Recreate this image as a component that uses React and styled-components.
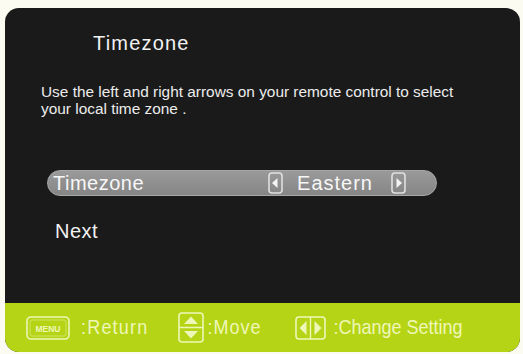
import React from 'react'
import styled, { createGlobalStyle } from 'styled-components'

const GlobalStyle = createGlobalStyle`
  html, body {
    margin: 0;
    padding: 0;
    background: #fbfbf1;
  }
  body {
    font-family: "Liberation Sans", Arial, sans-serif;
  }
`

const Frame = styled.div`
  margin: 8px 0 0 5px;
  width: 515px;
  height: 344px;
  border-radius: 14px;
  overflow: hidden;
  display: flex;
  flex-direction: column;
  background: #1a1a1a;
`

const Screen = styled.div`
  flex: 1;
  padding: 24px 0 0 36px;
  color: #f2f2f2;
`

const Title = styled.div`
  margin-left: 52px;
  font-size: 20px;
  line-height: 23px;
  letter-spacing: 1.2px;
`

const Description = styled.p`
  margin: 28px 0 0;
  font-size: 15.4px;
  line-height: 17px;
  color: #ececec;
`

const Row = styled.div`
  margin: 53px 0 0 6px;
  width: 390px;
  height: 26px;
  box-sizing: border-box;
  border-radius: 13px;
  background: linear-gradient(#9a9a9a, #858585);
  border: 1px solid #a8a8a8;
  display: flex;
  align-items: center;
  padding: 0 30px 0 5px;
  font-size: 20px;
  color: #f7f7f7;
  letter-spacing: 0.5px;
`

const Label = styled.span`
  flex: 1;
`

const Value = styled.span`
  margin: 0 18px 0 14px;
  letter-spacing: 1px;
`

const Next = styled.div`
  margin: 24px 0 0 14px;
  font-size: 20px;
  line-height: 23px;
  letter-spacing: 0.5px;
`

const Footer = styled.div`
  height: 49px;
  background: #b6d416;
  display: flex;
  align-items: center;
  padding-left: 21px;
  color: #eef7b8;
  font-size: 18px;
`

const Hint = styled.div`
  display: flex;
  align-items: center;
  margin-right: ${(p) => p.$gap}px;
`

const HintText = styled.span`
  display: inline-block;
  margin-left: ${(p) => p.$gap}px;
  letter-spacing: ${(p) => p.$spacing}px;
  transform: scaleY(1.12);
`

const ArrowBox = ({ dir }) => (
  <svg width="15" height="22" viewBox="0 0 15 22">
    <rect x="1" y="1" width="13" height="20" rx="3" fill="none" stroke="#e0e0e0" strokeWidth="1.6" />
    {dir === 'left'
      ? <polygon points="9.5,6 9.5,16 4,11" fill="#f4f4f4" />
      : <polygon points="5.5,6 5.5,16 11,11" fill="#f4f4f4" />}
  </svg>
)

const MenuIcon = () => (
  <svg width="44" height="24" viewBox="0 0 44 24">
    <rect x="1" y="1" width="42" height="22" rx="4" fill="none" stroke="#eef7b8" strokeWidth="1.6" />
    <rect x="4" y="4" width="36" height="16" rx="2" fill="none" stroke="#eef7b8" strokeWidth="0.8" opacity="0.6" />
    <text x="22" y="15.5" textAnchor="middle" fontSize="8.5" fontWeight="bold" fill="#eef7b8"
      fontFamily="Liberation Sans, Arial, sans-serif">MENU</text>
  </svg>
)

const MoveIcon = () => (
  <svg width="26" height="31" viewBox="0 0 26 31">
    <rect x="1" y="1" width="24" height="29" rx="3" fill="none" stroke="#eef7b8" strokeWidth="1.6" />
    <line x1="1" y1="15.5" x2="25" y2="15.5" stroke="#eef7b8" strokeWidth="1.4" />
    <polygon points="13,4.5 20,12 6,12" fill="#eef7b8" />
    <polygon points="13,26.5 20,19 6,19" fill="#eef7b8" />
  </svg>
)

const ChangeIcon = () => (
  <svg width="31" height="24" viewBox="0 0 31 24">
    <rect x="1" y="1" width="29" height="22" rx="3" fill="none" stroke="#eef7b8" strokeWidth="1.6" />
    <line x1="15.5" y1="1" x2="15.5" y2="23" stroke="#eef7b8" strokeWidth="1.4" />
    <polygon points="11.5,5 11.5,19 4.5,12" fill="#eef7b8" />
    <polygon points="19.5,5 19.5,19 26.5,12" fill="#eef7b8" />
  </svg>
)

export default function App() {
  return (
    <>
      <GlobalStyle />
      <Frame>
        <Screen>
          <Title>Timezone</Title>
          <Description>
            Use the left and right arrows on your remote control to select
            <br />
            your local time zone .
          </Description>
          <Row>
            <Label>Timezone</Label>
            <ArrowBox dir="left" />
            <Value>Eastern</Value>
            <ArrowBox dir="right" />
          </Row>
          <Next>Next</Next>
        </Screen>
        <Footer>
          <Hint $gap={30}>
            <MenuIcon />
            <HintText $gap={11} $spacing={1.2}>:Return</HintText>
          </Hint>
          <Hint $gap={34}>
            <MoveIcon />
            <HintText $gap={3} $spacing={1}>:Move</HintText>
          </Hint>
          <Hint $gap={0}>
            <ChangeIcon />
            <HintText $gap={7} $spacing={0}>:Change Setting</HintText>
          </Hint>
        </Footer>
      </Frame>
    </>
  )
}
